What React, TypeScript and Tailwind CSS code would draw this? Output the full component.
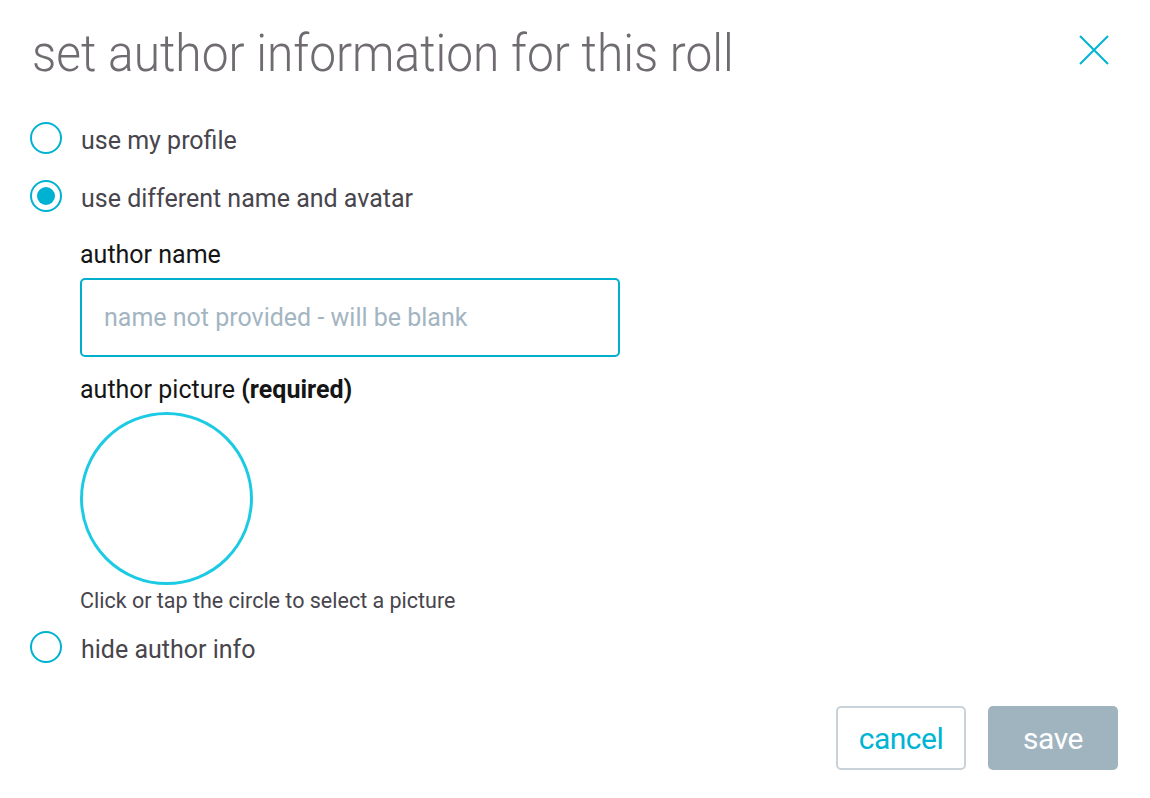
import { useState } from "react";

function Radio({ checked, label }: { checked?: boolean; label: string }) {
  return (
    <label className="flex h-[32px] items-center gap-[19px] cursor-pointer">
      <span className="flex h-[32px] w-[32px] shrink-0 items-center justify-center rounded-full border-2 border-[#00b2d2]">
        {checked && <span className="h-[18px] w-[18px] rounded-full bg-[#00b2d2]" />}
      </span>
      <span className="mt-[5px] text-[25px] leading-[30px] text-[#48454d]">{label}</span>
    </label>
  );
}

export default function App() {
  const [name, setName] = useState("");

  return (
    <div
      className="relative flex h-[798px] w-[1150px] flex-col bg-white pl-[30px] pr-[32px]"
      style={{ fontFamily: "Roboto, 'Noto Sans', sans-serif" }}
    >
      <div className="flex items-start justify-between pt-[24px]">
        <h1 className="ml-[2px] origin-left scale-x-[0.92] whitespace-nowrap text-[52px] font-light leading-[60px] text-[#6f6b71]">
          set author information for this roll
        </h1>
        <button className="mt-[11px] mr-[9px] text-[#00b4d4]">
          <svg width="30" height="30" viewBox="0 0 30 30" fill="none" stroke="currentColor" strokeWidth="2">
            <path d="M1 1 L29 29 M29 1 L1 29" />
          </svg>
        </button>
      </div>

      <div className="mt-[38px] flex flex-col gap-[26px]">
        <Radio label="use my profile" />
        <Radio checked label="use different name and avatar" />
      </div>

      <div className="ml-[50px] flex flex-col items-start">
        <span className="mt-[28px] text-[25px] leading-[30px] text-[#151515]">author name</span>
        <input
          value={name}
          onChange={(e) => setName(e.target.value)}
          placeholder="name not provided - will be blank"
          className="mt-[8px] h-[79px] w-[540px] rounded-[5px] border-2 border-[#00afcc] px-[22px] text-[25px] text-[#333] outline-none placeholder:text-[#a3b5c1]"
        />
        <span className="mt-[18px] text-[25px] leading-[30px] text-[#151515]">
          author picture <b className="font-bold">(required)</b>
        </span>
        <button className="mt-[7px] h-[173px] w-[173px] rounded-full border-[3px] border-[#1ccbe3]" />
        <span className="mt-[3px] text-[21.5px] leading-[26px] text-[#48454d]">
          Click or tap the circle to select a picture
        </span>
      </div>

      <div className="mt-[17px]">
        <Radio label="hide author info" />
      </div>

      <div className="mt-[43px] flex justify-end gap-[22px]">
        <button className="h-[64px] w-[130px] rounded-[5px] border-2 border-[#c9d2d9] text-[30px] tracking-[-0.5px] text-[#00b4d4]">
          cancel
        </button>
        <button className="h-[64px] w-[130px] rounded-[5px] bg-[#a0b4c0] text-[30px] tracking-[-0.5px] text-white">
          save
        </button>
      </div>
    </div>
  );
}
